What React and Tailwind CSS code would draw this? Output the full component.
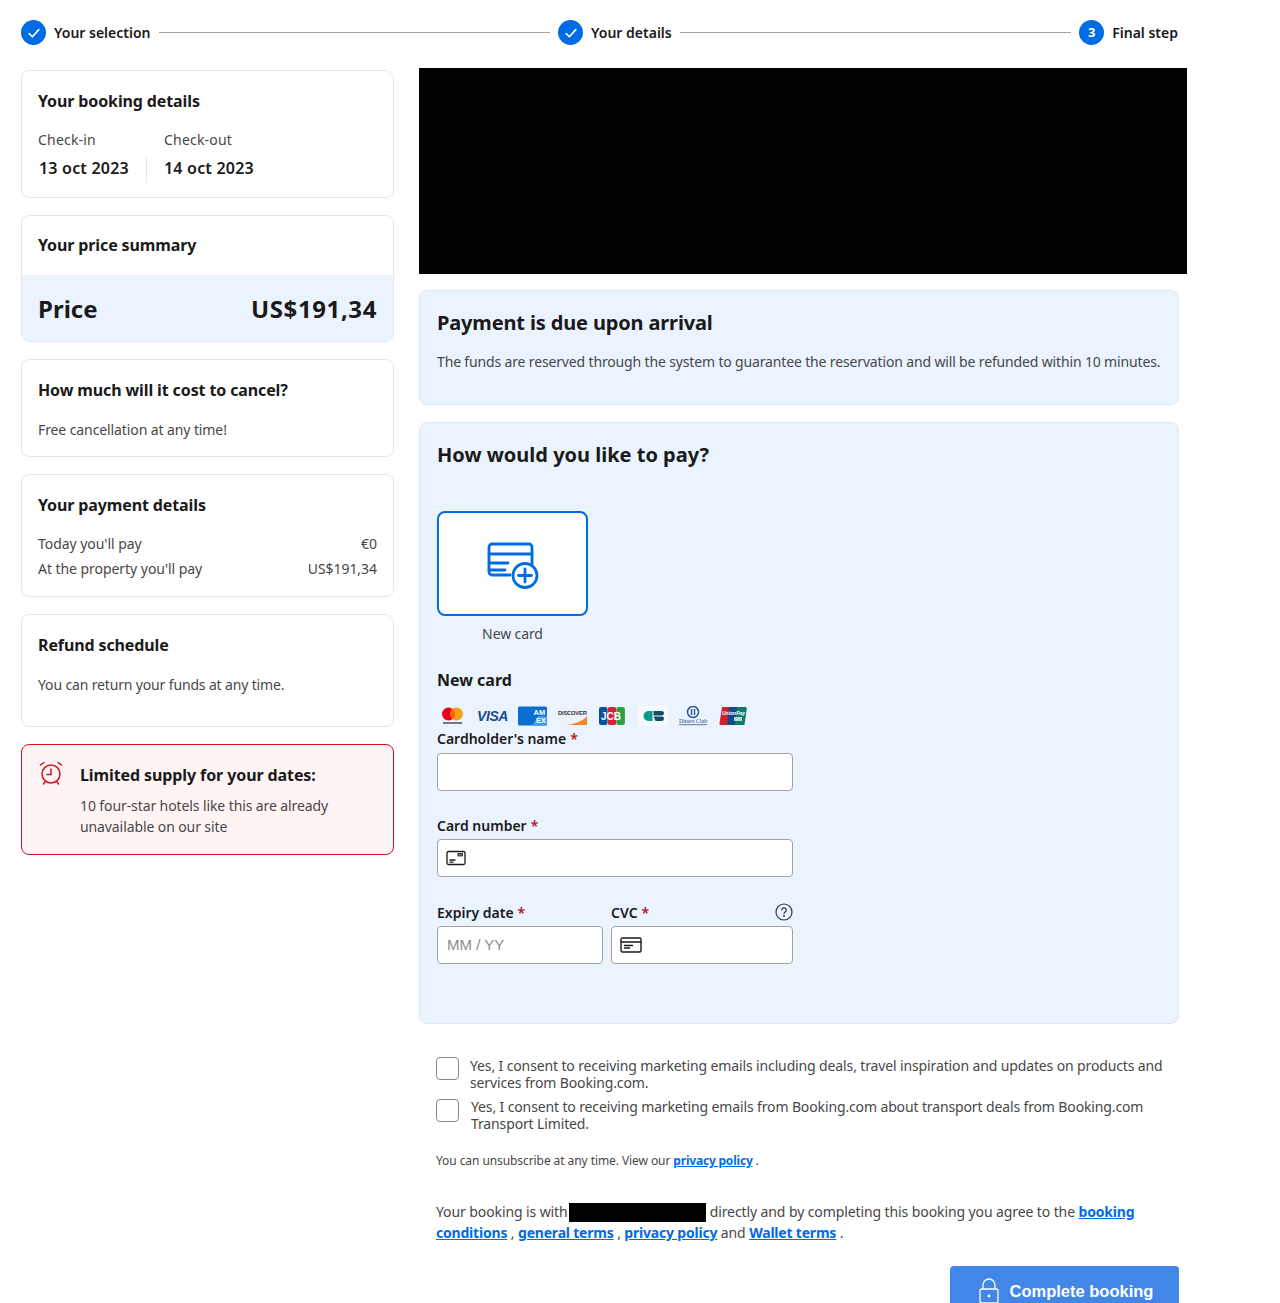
import React from 'react';

const StepCheck = () => (
  <span className="w-[25px] h-[25px] rounded-full bg-[#006ce4] flex items-center justify-center shrink-0">
    <svg width="14" height="14" viewBox="0 0 14 14" fill="none" stroke="#fff" strokeWidth="1.6" strokeLinecap="round" strokeLinejoin="round">
      <path d="M2.2 7.6 5.4 10.8 11.8 3.6" />
    </svg>
  </span>
);

const Card = ({ title, className, children }) => (
  <div className={`border border-[#e7e7e7] rounded-lg px-4 bg-white ${className}`}>
    <h3 className="text-[16px] leading-[22px] font-bold text-[#1a1a1a] tracking-[-0.12px]">{title}</h3>
    {children}
  </div>
);

const Req = () => <span className="text-[#b3112a] ml-1">*</span>;

const CardLogos = () => (
  <div className="flex items-center h-[20px] pl-[3px]">
    {/* mastercard */}
    <svg width="25" height="20" viewBox="0 0 25 20" className="mr-[12px]">
      <circle cx="8.5" cy="8" r="6.5" fill="#eb001b" />
      <circle cx="16.5" cy="8" r="6.5" fill="#f79e1b" />
      <path d="M12.5 2.9a6.5 6.5 0 0 1 0 10.2 6.5 6.5 0 0 1 0-10.2z" fill="#ff5f00" />
      <rect x="3" y="16" width="19" height="2" fill="#777" />
    </svg>
    <span className="w-[31px] mr-[10px] text-[14px] leading-[20px] italic font-bold text-[#1a4a8f] font-['Liberation_Sans',sans-serif] tracking-[-0.4px]">VISA</span>
    {/* amex */}
    <svg width="29" height="20" viewBox="0 0 29 20" className="mr-[11px]">
      <rect width="29" height="19" y="0.5" rx="1.5" fill="#0a6fd0" />
      <path d="M14 19.5 20 10 29 10v9.5z" fill="#3f9be8" />
      <text x="15.500" y="9" fontSize="7.500" fontWeight="700" fill="#fff" fontFamily="Liberation Sans">AM</text>
      <text x="18" y="16.500" fontSize="7.500" fontWeight="700" fill="#fff" fontFamily="Liberation Sans">EX</text>
    </svg>
    {/* discover */}
    <svg width="29" height="20" viewBox="0 0 29 20" className="mr-[12px]">
      <text x="0" y="9" fontSize="5.800" fontWeight="700" fill="#333" fontFamily="Liberation Sans" letterSpacing="-0.2">DISCOVER</text>
      <path d="M8 19C17 18 25 15 29 10v9z" fill="#f08a24" />
    </svg>
    {/* jcb */}
    <svg width="26" height="20" viewBox="0 0 26 20" className="mr-[13px]">
      <rect x="0" y="1" width="8.5" height="18" rx="2" fill="#0b4ea2" />
      <rect x="8.7" y="1" width="8.5" height="18" rx="2" fill="#d71f3a" />
      <rect x="17.4" y="1" width="8.5" height="18" rx="2" fill="#2f9e44" />
      <text x="2" y="14" fontSize="10" fontWeight="700" fill="#fff" fontFamily="Liberation Sans">JCB</text>
    </svg>
    {/* cb */}
    <svg width="30" height="20" viewBox="0 0 30 20" className="mr-[10px]">
      <rect width="30" height="20" fill="#f7fafd" />
      <path d="M14.500 5h-4a5 5 0 0 0 0 10h4z" fill="#0a9a8a" />
      <path d="M15.500 5h8c1.700 0 2.500 1 2.500 2.200S25 9.500 24 9.500h-8.500zM15.500 10.500H24c1.200 0 2 .9 2 2s-.9 2.500-2.500 2.500h-6z" fill="#17496f" />
    </svg>
    {/* diners */}
    <svg width="30" height="20" viewBox="0 0 30 20" className="mr-[11px]">
      <circle cx="15" cy="6" r="5.500" fill="#fff" stroke="#1c5a9c" strokeWidth="1.500" />
      <path d="M13.500 3v6M16.500 3v6" stroke="#1c5a9c" strokeWidth="1.500" />
      <text x="1" y="16.500" fontSize="5.800" fill="#2a4a7a" fontFamily="Liberation Serif">Diners Club</text>
      <rect x="1" y="18" width="28" height="1.200" fill="#7a8aa0" />
    </svg>
    {/* unionpay */}
    <svg width="28" height="20" viewBox="0 0 28 20">
      <path d="M3 1h8L9 19H1.500q-1.200 0-1-1.500z" fill="#d3202f" />
      <path d="M10 1h9l-2.500 18H8z" fill="#0f4c8a" />
      <path d="M18 1h8.500q1.500 0 1.300 1.500L25.500 19H15.500z" fill="#0b7d6e" />
      <text x="3" y="9" fontSize="5" fontWeight="700" fontStyle="italic" fill="#fff" fontFamily="Liberation Sans">UnionPay</text>
      <rect x="15" y="11" width="8" height="4" fill="#dfeee9" opacity="0.8" />
    </svg>
  </div>
);

const A = ({ children }) => <a href="#" className="font-bold text-[#006ce4] underline tracking-[-0.2px]">{children}</a>;

export default function App() {
  return (
    <div className="h-[1303px] overflow-hidden bg-white text-[#474747] font-['Noto_Sans',sans-serif] text-[14px] pl-[21px] pr-[93px]">
      {/* stepper */}
      <div className="flex items-center w-[1157px] h-[25px] mt-[20px] text-[14px] font-semibold text-[#1a1a1a]">
        <StepCheck />
        <span className="ml-2">Your selection</span>
        <span className="flex-1 h-px bg-[#a2a2a2] mx-2"></span>
        <StepCheck />
        <span className="ml-2">Your details</span>
        <span className="flex-1 h-px bg-[#a2a2a2] mx-2"></span>
        <span className="w-[25px] h-[25px] rounded-full bg-[#006ce4] text-white text-[13px] font-bold flex items-center justify-center shrink-0">3</span>
        <span className="ml-2">Final step</span>
      </div>

      <div className="flex mt-[23px] items-start">
        {/* left column */}
        <div className="w-[373px] shrink-0 flex flex-col gap-[17px] mt-[2px]">
          <Card title="Your booking details" className="h-[128px] pt-[19px]">
            <div className="grid grid-cols-[109px_1fr] mt-[17px] tracking-[0.2px]">
              <div className="leading-[22px] mb-[6px]">Check-in</div>
              <div className="leading-[22px] mb-[6px] pl-[17px]">Check-out</div>
              <div className="h-[26px] border-r border-[#e7e7e7] text-[16px] leading-[22px] font-semibold text-[#1a1a1a] pl-px">13 oct 2023</div>
              <div className="h-[26px] pl-[17px] text-[16px] leading-[22px] font-semibold text-[#1a1a1a]">14 oct 2023</div>
            </div>
          </Card>

          <div className="border border-[#e7e7e7] rounded-lg h-[127px] overflow-hidden">
            <h3 className="px-4 pt-[18px] h-[59px] text-[16px] leading-[22px] font-bold text-[#1a1a1a] tracking-[-0.12px]">Your price summary</h3>
            <div className="bg-[#ebf3ff] h-[67px] px-4 flex items-center justify-between text-[24px] font-bold text-[#1a1a1a]">
              <span>Price</span>
              <span className="tracking-[0.6px]">US$191,34</span>
            </div>
          </div>

          <Card title="How much will it cost to cancel?" className="h-[98px] pt-[19px]">
            <p className="mt-[18px] leading-[22px] tracking-[-0.1px]">Free cancellation at any time!</p>
          </Card>

          <Card title="Your payment details" className="h-[123px] pt-[19px]">
            <div className="mt-[17px] leading-[22px] tracking-[-0.05px]">
              <div className="flex justify-between mb-[3px]"><span>Today you'll pay</span><span>€0</span></div>
              <div className="flex justify-between"><span>At the property you'll pay</span><span>US$191,34</span></div>
            </div>
          </Card>

          <Card title="Refund schedule" className="h-[113px] pt-[19px]">
            <p className="mt-[18px] leading-[22px] tracking-[-0.15px]">You can return your funds at any time.</p>
          </Card>

          <div className="border border-[#d4111e] rounded-lg bg-[#fff4f4] h-[111px] pl-4 pt-[19px] flex">
            <svg width="26" height="26" viewBox="0 0 26 26" fill="none" stroke="#d4111e" strokeWidth="1.500" strokeLinecap="round" className="-mt-[4px] shrink-0">
              <circle cx="13" cy="14" r="9" />
              <path d="M13 9v5.500H9M2.500 5 6 2.500M23.500 5 20 2.500M7 22l-1.500 2M19 22l1.500 2" />
            </svg>
            <div className="ml-[16px]">
              <div className="text-[16px] leading-[22px] font-bold text-[#1a1a1a] tracking-[-0.1px]">Limited supply for your dates:</div>
              <p className="mt-[9px] leading-[21px] tracking-[-0.1px]">10 four-star hotels like this are already<br />unavailable on our site</p>
            </div>
          </div>
        </div>

        {/* right column */}
        <div className="ml-[25px] w-[768px] shrink-0">
          <div className="bg-black h-[206px]"></div>

          <div className="mt-[16px] w-[760px] h-[115px] bg-[#ebf3ff] border border-[#dce8f8] rounded-lg pl-[17px] pt-[19px]">
            <h2 className="text-[20px] leading-[26px] font-bold text-[#1a1a1a] tracking-[-0.15px]">Payment is due upon arrival</h2>
            <p className="mt-[15px] leading-[22px] tracking-[-0.15px]">The funds are reserved through the system to guarantee the reservation and will be refunded within 10 minutes.</p>
          </div>

          <div className="mt-[17px] w-[760px] h-[602px] bg-[#ebf3ff] border border-[#dce8f8] rounded-lg pl-[17px] pt-[19px]">
            <h2 className="text-[20px] leading-[26px] font-bold text-[#1a1a1a]">How would you like to pay?</h2>

            <div className="w-[151px] mt-[43px] text-center">
              <div className="h-[105px] bg-white border-2 border-[#006ce4] rounded-lg flex items-center justify-center">
                <svg width="52" height="47" viewBox="0 0 52 47" fill="none" stroke="#006ce4" strokeWidth="2.800" strokeLinecap="round" strokeLinejoin="round" className="mt-[3px]">
                  <path d="M23 33H5a3 3 0 0 1-3-3V5a3 3 0 0 1 3-3h37a3 3 0 0 1 3 3v17" />
                  <path d="M2 12h43M2 21h19M2 28h16" />
                  <circle cx="38" cy="33.500" r="12" />
                  <path d="M38 27v13M31.500 33.500h13" />
                </svg>
              </div>
              <div className="mt-[7px] leading-[22px] tracking-[-0.1px]">New card</div>
            </div>

            <h3 className="mt-[24px] text-[16px] leading-[22px] font-bold text-[#1a1a1a]">New card</h3>
            <div className="mt-[15px]"><CardLogos /></div>

            <div className="w-[356px] font-semibold text-[#1a1a1a]">
              <label className="block leading-[18px] mt-[4px]">Cardholder's name<Req /></label>
              <div className="h-[38px] mt-[5px] bg-white border border-[#a2a2a2] rounded"></div>

              <label className="block leading-[18px] mt-[26px]">Card number<Req /></label>
              <div className="h-[38px] mt-[4px] bg-white border border-[#a2a2a2] rounded flex items-center pl-[8px]">
                <svg width="20" height="16" viewBox="0 0 20 16" fill="none" stroke="#1a1a1a" strokeWidth="1.300" strokeLinecap="round">
                  <rect x="1" y="1.500" width="18" height="13" rx="1.500" />
                  <rect x="12" y="3.500" width="4.500" height="2.500" fill="#777" strokeWidth="0.800" />
                  <path d="M4 10h5M4 12.200h3" />
                </svg>
              </div>

              <div className="flex mt-[27px] gap-[8px]">
                <div className="w-[166px] shrink-0">
                  <label className="block leading-[18px]">Expiry date<Req /></label>
                  <div className="h-[38px] mt-[4px] bg-white border border-[#a2a2a2] rounded flex items-center pl-[9px] text-[15px] font-normal text-[#8c8c8c] font-['Liberation_Sans',sans-serif]">MM / YY</div>
                </div>
                <div className="flex-1">
                  <label className="flex items-center justify-between leading-[18px]">
                    <span>CVC<Req /></span>
                    <svg width="18" height="18" viewBox="0 0 18 18" fill="none" stroke="#333" strokeWidth="1.200" strokeLinecap="round" className="-mt-[2px]">
                      <circle cx="9" cy="9" r="8" />
                      <path d="M6.800 7a2.200 2.200 0 1 1 3.400 1.900c-.8.500-1.200 1-1.200 1.800" />
                      <circle cx="9" cy="13" r="0.400" />
                    </svg>
                  </label>
                  <div className="h-[38px] mt-[4px] bg-white border border-[#a2a2a2] rounded flex items-center pl-[8px]">
                    <svg width="22" height="16" viewBox="0 0 22 16" fill="none" stroke="#1a1a1a" strokeWidth="1.400" strokeLinecap="round">
                      <rect x="1" y="1" width="20" height="14" rx="1.500" />
                      <path d="M1 5h20M4.500 8.500h8M4.500 11h5" />
                    </svg>
                  </div>
                </div>
              </div>
            </div>
          </div>

          {/* consents */}
          <div className="w-[760px] pl-[17px] pr-[10px] tracking-[-0.13px]">
            <label className="flex mt-[33px]">
              <span className="w-[23px] h-[23px] border border-[#868686] rounded shrink-0"></span>
              <span className="ml-[11px] leading-[17px]">Yes, I consent to receiving marketing emails including deals, travel inspiration and updates on products and services from Booking.com.</span>
            </label>
            <label className="flex mt-[7px]">
              <span className="w-[23px] h-[23px] border border-[#868686] rounded shrink-0 mt-[1px]"></span>
              <span className="ml-[12px] leading-[17px]">Yes, I consent to receiving marketing emails from Booking.com about transport deals from Booking.com Transport Limited.</span>
            </label>
            <p className="mt-[20px] text-[12px] leading-[18px] tracking-[-0.08px]">You can unsubscribe at any time. View our <A>privacy policy</A> .</p>
            <p className="mt-[31px] leading-[21px] tracking-[-0.1px]">
              Your booking is with <span className="inline-block align-[-5px] w-[137px] h-[19px] -ml-[2px] bg-black"></span> directly and by completing this booking you agree to the <A>booking conditions</A> , <A>general terms</A> , <A>privacy policy</A> and <A>Wallet terms</A> .
            </p>
            <div className="flex justify-end mt-[23px] -mr-[10px]">
              <button className="w-[229px] h-[50px] bg-[#4287e8] rounded flex items-center justify-center gap-[11px] pl-[3px] text-white text-[16.5px] font-bold font-['Liberation_Sans',sans-serif] tracking-normal">
                <svg width="20" height="26" viewBox="0 0 20 26" fill="none" stroke="#fff" strokeWidth="1.300">
                  <rect x="1" y="11" width="18" height="14" rx="2" />
                  <path d="M4 11V7a6 6 0 0 1 12 0v4" />
                  <circle cx="10" cy="18" r="0.800" fill="#fff" />
                </svg>
                Complete booking
              </button>
            </div>
          </div>
        </div>
      </div>
    </div>
  );
}
